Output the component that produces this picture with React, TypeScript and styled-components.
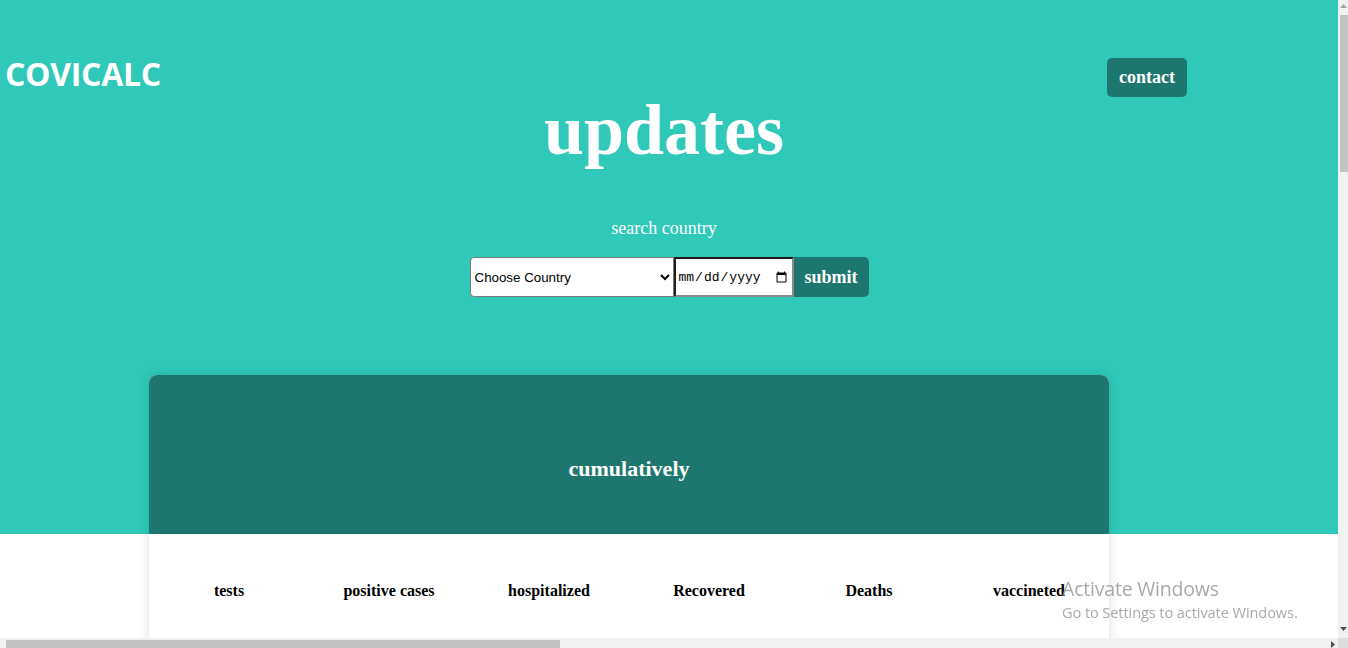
import React from "react";
import styled, { createGlobalStyle } from "styled-components";

const TEAL = "#2fc8b9";
const DARK = "#1e776e";

const GlobalStyle = createGlobalStyle`
  html, body { margin: 0; padding: 0; overflow: hidden; }
  body {
    font-family: "Liberation Serif", "Times New Roman", serif;
    background: linear-gradient(${TEAL} 0, ${TEAL} 534px, #ffffff 534px);
  }
`;

const Page = styled.div`
  width: 1338px;
  height: 638px;
  overflow: hidden;
  display: flex;
  flex-direction: column;
`;

const Hero = styled.header`
  display: flex;
  flex-direction: column;
  align-items: center;
  color: #ffffff;
`;

const NavBar = styled.nav`
  width: 100%;
  box-sizing: border-box;
  display: flex;
  justify-content: space-between;
  align-items: flex-start;
  padding: 58px 151px 0 5px;
`;

const Logo = styled.div`
  font-family: "Open Sans", "Noto Sans", sans-serif;
  font-weight: 700;
  font-size: 32px;
  line-height: 32px;
  color: #ffffff;
  letter-spacing: -0.3px;
`;

const ContactButton = styled.a`
  width: 80px;
  height: 39px;
  display: flex;
  align-items: center;
  justify-content: center;
  background: ${DARK};
  border-radius: 5px;
  color: #ffffff;
  font-weight: 700;
  font-size: 18px;
  text-decoration: none;
`;

const Title = styled.h1`
  margin: 0;
  padding-right: 10px;
  font-size: 72px;
  line-height: 66px;
  font-weight: 700;
`;

const SearchLabel = styled.p`
  margin: 55px 0 0;
  padding-right: 10px;
  font-size: 18px;
`;

const SearchForm = styled.form`
  display: flex;
  margin-top: 18px;
  height: 40px;
`;

const CountrySelect = styled.select`
  width: 204px;
  height: 40px;
  box-sizing: border-box;
  border: 1px solid #7a7a7a;
  border-radius: 4px 0 0 4px;
  background: #ffffff;
  font-family: "Liberation Sans", Arial, sans-serif;
  font-size: 13.333px;
  padding: 0;
  color: #000;
`;

const DateInput = styled.input`
  width: 120px;
  height: 40px;
  box-sizing: border-box;
  border-width: 2px;
  border-style: solid;
  border-color: #1e1e1e #8a8a8a #8a8a8a #1e1e1e;
  background: #ffffff;
  font-family: "Liberation Mono", monospace;
  font-size: 13px;
  padding: 1px 2px;
`;

const SubmitButton = styled.button`
  width: 75px;
  height: 40px;
  border: none;
  border-radius: 0 5px 5px 0;
  background: ${DARK};
  color: #ffffff;
  font-family: "Liberation Serif", "Times New Roman", serif;
  font-weight: 700;
  font-size: 18px;
  padding: 0;
`;

const Card = styled.section`
  width: 960px;
  margin: 78px 0 0 149px;
  border-radius: 8px 8px 0 0;
  background: #ffffff;
  box-shadow: 0 0 12px rgba(0, 0, 0, 0.12);
  min-height: 400px;
  flex-shrink: 0;
`;

const CardHead = styled.div`
  height: 159px;
  box-sizing: border-box;
  padding-top: 81px;
  background: ${DARK};
  border-radius: 8px 8px 0 0;
  text-align: center;
  color: #ffffff;
  font-size: 22px;
  font-weight: 700;
`;

const StatsRow = styled.div`
  display: grid;
  grid-template-columns: repeat(6, 160px);
  padding-top: 48px;
`;

const StatLabel = styled.div`
  text-align: center;
  font-size: 16px;
  font-weight: 700;
  color: #000000;
`;

/* Browser scrollbars, drawn over the page edges */
const VScrollbar = styled.div`
  position: fixed;
  top: 0;
  right: 0;
  width: 10px;
  height: 638px;
  background: #f1f1f1;
`;

const HScrollbar = styled.div`
  position: fixed;
  left: 0;
  bottom: 0;
  width: 1338px;
  height: 10px;
  background: #f1f1f1;
`;

const ScrollCorner = styled.div`
  position: fixed;
  right: 0;
  bottom: 0;
  width: 10px;
  height: 10px;
  background: #dcdcdc;
`;

const VThumb = styled.div`
  position: absolute;
  left: 2px;
  top: 15px;
  width: 8px;
  height: 157px;
  background: #c1c1c1;
`;

const HThumb = styled.div`
  position: absolute;
  left: 6px;
  top: 2px;
  width: 554px;
  height: 8px;
  background: #c1c1c1;
`;

const Arrow = styled.svg<{ $x: number; $y: number }>`
  position: absolute;
  left: ${(p) => p.$x}px;
  top: ${(p) => p.$y}px;
`;

const Watermark = styled.div`
  position: fixed;
  left: 1062px;
  top: 576px;
  font-family: "Open Sans", "Noto Sans", sans-serif;
  color: rgba(140, 140, 140, 0.75);
  pointer-events: none;
`;

const WatermarkTitle = styled.div`
  font-size: 19.5px;
  line-height: 26px;
  letter-spacing: -0.2px;
`;

const WatermarkSub = styled.div`
  font-size: 14.6px;
  line-height: 20px;
  letter-spacing: -0.1px;
`;

const stats = ["tests", "positive cases", "hospitalized", "Recovered", "Deaths", "vaccineted"];

export default function App() {
  return (
    <>
      <GlobalStyle />
      <Page>
        <Hero>
          <NavBar>
            <Logo>COVICALC</Logo>
            <ContactButton href="#">contact</ContactButton>
          </NavBar>
          <Title>updates</Title>
          <SearchLabel>search country</SearchLabel>
          <SearchForm onSubmit={(e) => e.preventDefault()}>
            <CountrySelect defaultValue="">
              <option value="">Choose Country</option>
            </CountrySelect>
            <DateInput type="date" />
            <SubmitButton type="submit">submit</SubmitButton>
          </SearchForm>
        </Hero>
        <Card>
          <CardHead>cumulatively</CardHead>
          <StatsRow>
            {stats.map((s) => (
              <StatLabel key={s}>{s}</StatLabel>
            ))}
          </StatsRow>
        </Card>
      </Page>
      <Watermark>
        <WatermarkTitle>Activate Windows</WatermarkTitle>
        <WatermarkSub>Go to Settings to activate Windows.</WatermarkSub>
      </Watermark>
      <VScrollbar>
        <Arrow $x={2} $y={4} width="7" height="4" viewBox="0 0 7 4">
          <polygon points="3.5,0 7,4 0,4" fill="#a3a3a3" />
        </Arrow>
        <VThumb />
        <Arrow $x={2} $y={627} width="7" height="4" viewBox="0 0 7 4">
          <polygon points="0,0 7,0 3.5,4" fill="#505050" />
        </Arrow>
      </VScrollbar>
      <HScrollbar>
        <HThumb />
        <Arrow $x={1331} $y={3} width="4" height="7" viewBox="0 0 4 7">
          <polygon points="0,0 4,3.5 0,7" fill="#505050" />
        </Arrow>
      </HScrollbar>
      <ScrollCorner />
    </>
  );
}
